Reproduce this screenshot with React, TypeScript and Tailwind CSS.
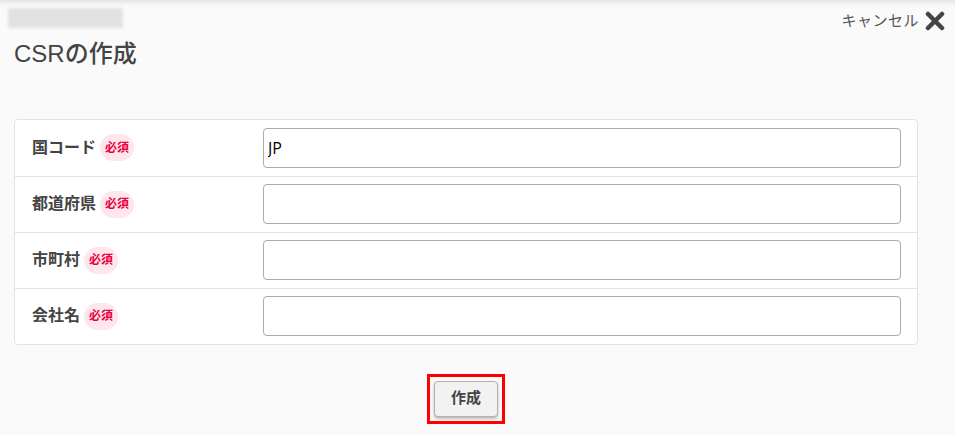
import React from 'react';

const fields = [
    { label: '国コード', value: 'JP' },
    { label: '都道府県', value: '' },
    { label: '市町村', value: '' },
    { label: '会社名', value: '' },
];

const App: React.FC = () => {
    return (
        <div
            className="relative min-h-[435px] w-[955px] overflow-hidden bg-[#fafafa] text-[#444]"
            style={{ fontFamily: '"Liberation Sans", "Noto Sans CJK JP", sans-serif' }}
        >
            {/* top edge shadow */}
            <div className="absolute inset-x-0 top-0 h-[6px] bg-gradient-to-b from-[#e6e6e6] to-[#fafafa]"></div>

            <div className="relative flex items-start justify-between pl-[8px] pr-[10px] pt-[8px]">
                <div className="h-[20px] w-[115px] bg-[#e2e2e2] blur-[1.5px]"></div>
                <button className="mt-[2px] flex items-center gap-[6px] text-[15px] text-[#555]">
                    <span className="tracking-[0.5px]">キャンセル</span>
                    <svg width="20" height="20" viewBox="0 0 20 20">
                        <path d="M3 3 L17 17 M17 3 L3 17" stroke="#444" strokeWidth="4.5" strokeLinecap="round" />
                    </svg>
                </button>
            </div>

            <h1 className="ml-[14px] mt-[5px] text-[24px] font-medium leading-[32px] text-[#444]">CSRの作成</h1>

            <div className="ml-[14px] w-[904px]">
                <div className="mt-[49px] rounded-[4px] border border-[#e3e3e3] bg-white">
                    {fields.map((f, i) => (
                        <div
                            key={f.label}
                            className={`flex h-[56px] items-center ${i > 0 ? 'border-t border-[#e3e3e3]' : ''}`}
                        >
                            <div className="flex w-[248px] items-center pl-[17px]">
                                <span className="text-[16px] font-bold text-[#444]">{f.label}</span>
                                <span className="ml-[4px] flex h-[27px] w-[34px] items-center justify-center rounded-full bg-[#fde6ec] text-[12px] font-bold text-[#e8003d]">
                                    必須
                                </span>
                            </div>
                            <input
                                defaultValue={f.value}
                                className="h-[40px] w-[638px] rounded-[4px] border border-[#aaa] bg-white px-[4px] text-[16px] text-black outline-none"
                                style={{ fontFamily: '"Open Sans", "Noto Sans CJK JP", sans-serif' }}
                            />
                        </div>
                    ))}
                </div>

                <div className="mt-[29px] flex justify-center">
                    <div className="border-[3px] border-[#ff0000] px-[4px] py-[4px]">
                        <button className="h-[36px] w-[64px] rounded-[4px] border border-[#b0b0b0] bg-[#f2f2f2] text-[15px] font-bold text-[#444] shadow-[0_2px_3px_rgba(0,0,0,0.25)]">
                            作成
                        </button>
                    </div>
                </div>
            </div>
        </div>
    );
};

export default App;
